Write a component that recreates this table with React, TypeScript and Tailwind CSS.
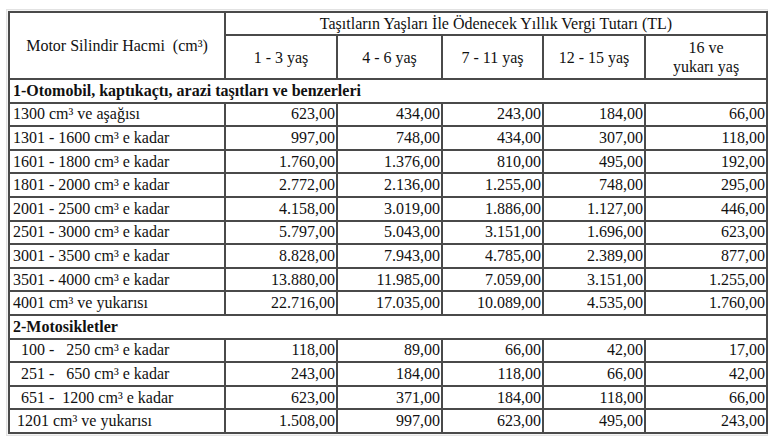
const ageGroups = ["1 - 3 yaş", "4 - 6 yaş", "7 - 11 yaş", "12 - 15 yaş"];

type Row = { label: string; values: string[] };

const cars: Row[] = [
  { label: "1300 cm³ ve aşağısı", values: ["623,00", "434,00", "243,00", "184,00", "66,00"] },
  { label: "1301 - 1600 cm³ e kadar", values: ["997,00", "748,00", "434,00", "307,00", "118,00"] },
  { label: "1601 - 1800 cm³ e kadar", values: ["1.760,00", "1.376,00", "810,00", "495,00", "192,00"] },
  { label: "1801 - 2000 cm³ e kadar", values: ["2.772,00", "2.136,00", "1.255,00", "748,00", "295,00"] },
  { label: "2001 - 2500 cm³ e kadar", values: ["4.158,00", "3.019,00", "1.886,00", "1.127,00", "446,00"] },
  { label: "2501 - 3000 cm³ e kadar", values: ["5.797,00", "5.043,00", "3.151,00", "1.696,00", "623,00"] },
  { label: "3001 - 3500 cm³ e kadar", values: ["8.828,00", "7.943,00", "4.785,00", "2.389,00", "877,00"] },
  { label: "3501 - 4000 cm³ e kadar", values: ["13.880,00", "11.985,00", "7.059,00", "3.151,00", "1.255,00"] },
  { label: "4001 cm³ ve yukarısı", values: ["22.716,00", "17.035,00", "10.089,00", "4.535,00", "1.760,00"] },
];

const motorcycles: Row[] = [
  { label: "  100 -   250 cm³ e kadar", values: ["118,00", "89,00", "66,00", "42,00", "17,00"] },
  { label: "  251 -   650 cm³ e kadar", values: ["243,00", "184,00", "118,00", "66,00", "42,00"] },
  { label: "  651 -  1200 cm³ e kadar", values: ["623,00", "371,00", "184,00", "118,00", "66,00"] },
  { label: " 1201 cm³ ve yukarısı", values: ["1.508,00", "997,00", "623,00", "495,00", "243,00"] },
];

const cell = "border-2 border-[#4a4a4a] p-0 text-[16px] leading-[18px] align-middle font-[Liberation_Serif]";

const DataRow = ({ row }: { row: Row }) => (
  <tr className="h-[23.6px]">
    <td className={`${cell} pl-[3px] whitespace-pre`}>{row.label}</td>
    {row.values.map((v, i) => (
      <td key={i} className={`${cell} text-right pr-[1px]`}>
        {v}
      </td>
    ))}
  </tr>
);

const SectionRow = ({ title }: { title: string }) => (
  <tr className="h-[23.6px]">
    <td colSpan={6} className={`${cell} pl-[3px] font-bold`}>
      {title}
    </td>
  </tr>
);

export default function App() {
  return (
    <div className="w-[770px] h-[439px] bg-white pt-[9px] pl-[6px] text-[16px] text-[#111] font-[Liberation_Serif]">
      <div className="w-[762px] border border-[#e2e2e2] p-[1px] bg-[#f4f4f4]">
        <table className="border-collapse table-fixed w-[758px] bg-white text-[#111]">
          <colgroup>
            <col className="w-[216px]" />
            <col className="w-[112px]" />
            <col className="w-[105px]" />
            <col className="w-[101px]" />
            <col className="w-[102px]" />
            <col className="w-[122px]" />
          </colgroup>
          <thead>
            <tr className="h-[23px]">
              <th rowSpan={2} className={`${cell} font-normal text-center`}>
                <span className="whitespace-pre">Motor Silindir Hacmi  (cm³)</span>
              </th>
              <th colSpan={5} className={`${cell} font-normal text-center`}>
                Taşıtların Yaşları İle Ödenecek Yıllık Vergi Tutarı (TL)
              </th>
            </tr>
            <tr className="h-[44px]">
              {ageGroups.map((g) => (
                <th key={g} className={`${cell} font-normal text-center pt-[2px]`}>
                  {g}
                </th>
              ))}
              <th className={`${cell} font-normal text-center !leading-[19px]`}>
                16 ve
                <br />
                yukarı yaş
              </th>
            </tr>
          </thead>
          <tbody>
            <SectionRow title="1-Otomobil, kaptıkaçtı, arazi taşıtları ve benzerleri" />
            {cars.map((r) => (
              <DataRow key={r.label} row={r} />
            ))}
            <SectionRow title="2-Motosikletler" />
            {motorcycles.map((r) => (
              <DataRow key={r.label} row={r} />
            ))}
          </tbody>
        </table>
      </div>
    </div>
  );
}
